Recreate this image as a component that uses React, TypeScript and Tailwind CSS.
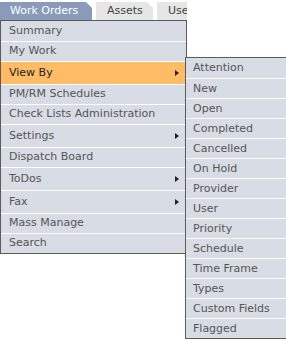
import React from 'react';

interface MenuItem {
  label: string;
  sub?: boolean;
  active?: boolean;
}

const mainItems: MenuItem[] = [
  { label: 'Summary' },
  { label: 'My Work' },
  { label: 'View By', sub: true, active: true },
  { label: 'PM/RM Schedules' },
  { label: 'Check Lists Administration' },
  { label: 'Settings', sub: true },
  { label: 'Dispatch Board' },
  { label: 'ToDos', sub: true },
  { label: 'Fax', sub: true },
  { label: 'Mass Manage' },
  { label: 'Search' },
];

const viewByItems: string[] = [
  'Attention',
  'New',
  'Open',
  'Completed',
  'Cancelled',
  'On Hold',
  'Provider',
  'User',
  'Priority',
  'Schedule',
  'Time Frame',
  'Types',
  'Custom Fields',
  'Flagged',
];

const Arrow: React.FC = () => (
  <span className="ml-auto mr-[7px] h-0 w-0 border-y-[3px] border-l-[4px] border-y-transparent border-l-[#222]" />
);

const App: React.FC = () => {
  return (
    <div className="relative h-[339px] w-[286px] overflow-hidden bg-white font-['DejaVu_Sans',Verdana,sans-serif] text-[11px]">
      {/* tabs */}
      <div className="flex h-5 w-[187px] items-end gap-1 overflow-hidden whitespace-nowrap">
        <div className="flex h-[18px] w-[92px] shrink-0 items-center pl-[10px] text-white bg-[#8a9bb9] [clip-path:polygon(0_0,calc(100%-6px)_0,100%_6px,100%_100%,0_100%)]">
          Work Orders
        </div>
        <div className="flex h-[18px] w-[57px] shrink-0 items-center pl-[11px] text-[#444] bg-[#e6e6e6] [clip-path:polygon(0_0,calc(100%-6px)_0,100%_6px,100%_100%,0_100%)]">
          Assets
        </div>
        <div className="flex h-[18px] w-[57px] shrink-0 items-center pl-[11px] text-[#444] bg-[#e6e6e6]">
          Users
        </div>
      </div>

      {/* main menu */}
      <div className="w-[187px] border border-[#5a5a5a] bg-[#d8dce5]">
        {mainItems.map((item, i) => (
          <div
            key={item.label}
            className={`flex items-center pl-[8px] ${item.sub ? 'h-[23px]' : 'h-[20px]'} ${
              i > 0 ? 'border-t border-white' : ''
            } ${item.active ? 'bg-[#ffbb66] text-[#222]' : 'text-[#555]'}`}
          >
            <span>{item.label}</span>
            {item.sub && <Arrow />}
          </div>
        ))}
      </div>

      {/* View By flyout */}
      <div className="absolute left-[185px] top-[57px] w-[101px] border border-r-0 border-[#5a5a5a] bg-[#d8dce5]">
        {viewByItems.map((label, i) => (
          <div
            key={label}
            className={`flex h-[20px] items-center pl-[7px] pt-[1px] text-[#555] ${i > 0 ? 'border-t border-white' : ''}`}
          >
            {label}
          </div>
        ))}
      </div>
    </div>
  );
};

export default App;
